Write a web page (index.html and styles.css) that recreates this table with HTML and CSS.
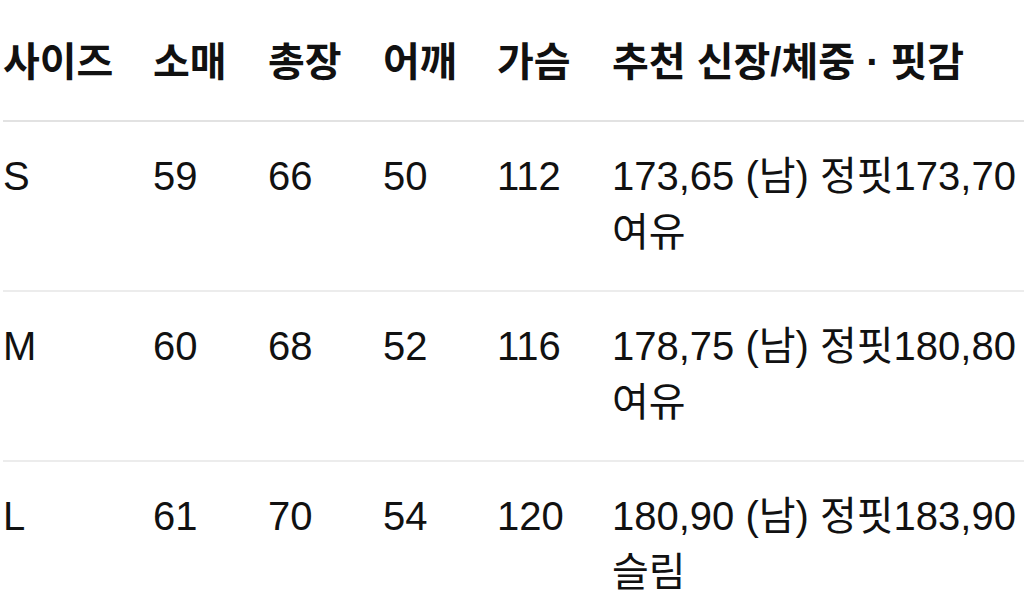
FILE: index.html
```html
<!DOCTYPE html>
<html lang="ko">
<head>
<meta charset="utf-8">
<link rel="stylesheet" href="styles.css">
</head>
<body>
<table class="size-table">
  <colgroup>
    <col class="c1"><col class="c2"><col class="c3"><col class="c4"><col class="c5"><col class="c6">
  </colgroup>
  <thead>
    <tr><th>사이즈</th><th>소매</th><th>총장</th><th>어깨</th><th>가슴</th><th>추천 신장/체중 · 핏감</th></tr>
  </thead>
  <tbody>
    <tr><td>S</td><td>59</td><td>66</td><td>50</td><td>112</td><td class="rec">173,65 (남) 정핏173,70<br>여유</td></tr>
    <tr><td>M</td><td>60</td><td>68</td><td>52</td><td>116</td><td class="rec">178,75 (남) 정핏180,80<br>여유</td></tr>
    <tr><td>L</td><td>61</td><td>70</td><td>54</td><td>120</td><td class="rec">180,90 (남) 정핏183,90<br>슬림</td></tr>
  </tbody>
</table>
</body>
</html>
```
FILE: styles.css
```css
html, body {
  margin: 0;
  padding: 0;
  background: #fff;
  overflow: hidden;
}
body {
  padding-left: 3px;
  font-family: "Liberation Sans", "Noto Sans CJK KR", sans-serif;
  font-size: 40px;
  color: #111;
}
.size-table {
  border-collapse: collapse;
  table-layout: fixed;
  width: 1021px;
}
.c1 { width: 150px; }
.c2 { width: 115px; }
.c3 { width: 115px; }
.c4 { width: 114px; }
.c5 { width: 115px; }
.size-table th,
.size-table td {
  text-align: left;
  vertical-align: top;
  padding: 0;
  line-height: 56px;
  white-space: nowrap;
}
.size-table th {
  font-weight: bold;
  padding-top: 34px;
  padding-bottom: 30px;
  border-bottom: 2px solid #e2e2e2;
}
.size-table td {
  font-weight: normal;
  padding-top: 26px;
  padding-bottom: 30px;
}
.size-table tbody tr + tr td {
  border-top: 2px solid #ececec;
}
```
